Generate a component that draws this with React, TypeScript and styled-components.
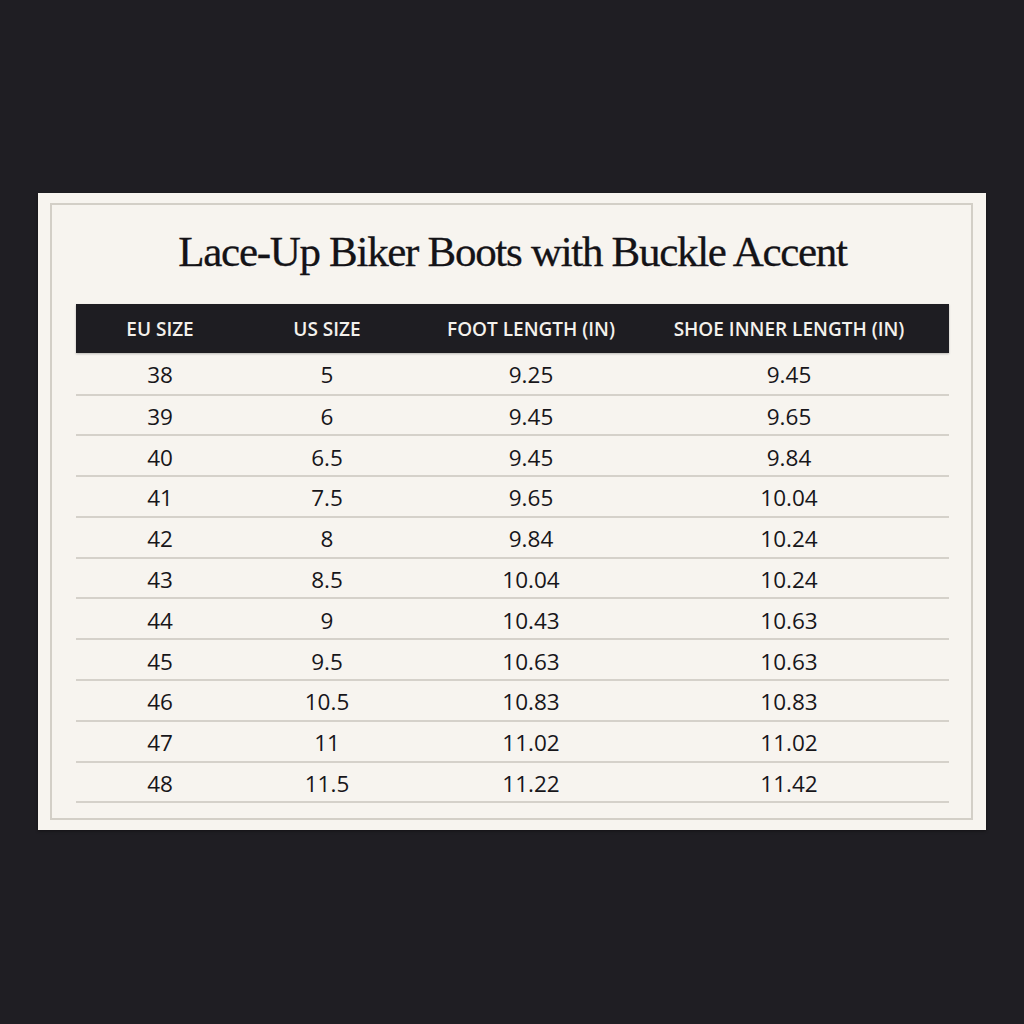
import styled, { createGlobalStyle } from 'styled-components';

const GlobalStyle = createGlobalStyle`
  html, body {
    margin: 0;
    padding: 0;
    background: #1f1e23;
  }
  body {
    width: 1024px;
    height: 1024px;
    overflow: hidden;
  }
`;

const Page = styled.div`
  padding: 193px 0 0 38px;
`;

const Card = styled.div`
  width: 948px;
  height: 637px;
  box-sizing: border-box;
  padding: 10px 13px 10px 12px;
  background: #f7f4ef;
  box-shadow: 0 1px 3px rgba(0, 0, 0, 0.4);
`;

const Frame = styled.div`
  height: 100%;
  box-sizing: border-box;
  border: 2px solid #d3cfc7;
  padding: 0 22px 0 24px;
  display: flex;
  flex-direction: column;
`;

const Title = styled.h1`
  margin: 17px 0 0;
  height: 82px;
  text-align: center;
  font-family: 'Liberation Serif', 'DejaVu Serif', serif;
  font-weight: 400;
  font-size: 43px;
  letter-spacing: -1.3px;
  line-height: 60px;
  color: #141317;
  -webkit-text-stroke: 0.3px #141317;
`;

const Table = styled.div`
  display: flex;
  flex-direction: column;
`;

const Grid = styled.div`
  display: grid;
  grid-template-columns: 168px 166px 242px 274px 22px;
  align-items: center;
`;

const HeaderRow = styled(Grid)`
  height: 49px;
  background: #1e1d22;
  box-shadow: 0 1px 2px rgba(0, 0, 0, 0.25);
`;

const HeadCell = styled.div`
  text-align: center;
  font-family: 'Open Sans', 'Noto Sans', sans-serif;
  font-size: 19px;
  font-weight: 600;
  color: #f4f1ec;
  white-space: nowrap;
`;

const Row = styled(Grid)`
  height: 40.8px;
  border-bottom: 2px solid #d5d1ca;
  box-sizing: border-box;
`;

const FirstRow = styled(Row)`
  height: 42.5px;
`;

const Cell = styled.div`
  text-align: center;
  font-family: 'Open Sans', 'Noto Sans', sans-serif;
  font-size: 22.5px;
  color: #17161a;
  padding-top: 3px;
`;

const headers = ['EU SIZE', 'US SIZE', 'FOOT LENGTH (IN)', 'SHOE INNER LENGTH (IN)'];

const rows = [
  ['38', '5', '9.25', '9.45'],
  ['39', '6', '9.45', '9.65'],
  ['40', '6.5', '9.45', '9.84'],
  ['41', '7.5', '9.65', '10.04'],
  ['42', '8', '9.84', '10.24'],
  ['43', '8.5', '10.04', '10.24'],
  ['44', '9', '10.43', '10.63'],
  ['45', '9.5', '10.63', '10.63'],
  ['46', '10.5', '10.83', '10.83'],
  ['47', '11', '11.02', '11.02'],
  ['48', '11.5', '11.22', '11.42'],
];

export default function App() {
  return (
    <>
      <GlobalStyle />
      <Page>
        <Card>
          <Frame>
            <Title>Lace-Up Biker Boots with Buckle Accent</Title>
            <Table>
              <HeaderRow>
                {headers.map((h) => (
                  <HeadCell key={h}>{h}</HeadCell>
                ))}
              </HeaderRow>
              {rows.map((r, i) => {
                const R = i === 0 ? FirstRow : Row;
                return (
                  <R key={r[0]}>
                    {r.map((v, j) => (
                      <Cell key={j}>{v}</Cell>
                    ))}
                  </R>
                );
              })}
            </Table>
          </Frame>
        </Card>
      </Page>
    </>
  );
}
